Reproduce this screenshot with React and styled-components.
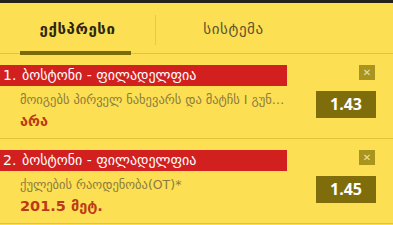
import React from 'react';
import styled, { createGlobalStyle } from 'styled-components';

const GlobalStyle = createGlobalStyle`
    html, body {
        margin: 0;
        padding: 0;
        background: #fcdf52;
        font-family: 'DejaVu Sans', 'Noto Sans', sans-serif;
    }
`;

const Page = styled.div`
    width: 393px;
    height: 225px;
    overflow: hidden;
    border-top: 3px solid #24211a;
    box-sizing: border-box;
    background: #fcdf52;
`;

const Tabs = styled.div`
    display: flex;
    height: 51px;
    border-bottom: 1px solid #e4c23c;
    box-sizing: border-box;
`;

const Tab = styled.div`
    position: relative;
    width: 155px;
    display: flex;
    align-items: center;
    justify-content: center;
    font-size: 15px;
    letter-spacing: 0.6px;
    color: ${(p) => (p.active ? '#2b2612' : '#5b5330')};
    font-weight: ${(p) => (p.active ? 'bold' : 'normal')};
    padding-top: 2px;

    &::after {
        content: '';
        display: ${(p) => (p.active ? 'block' : 'none')};
        position: absolute;
        left: 20px;
        right: 24px;
        bottom: -2px;
        height: 4px;
        background: #7b6a08;
    }
`;

const Divider = styled.div`
    width: 1px;
    margin: 12px 0 8px;
    background: #e8c84a;
`;

const Card = styled.div`
    display: flex;
    padding: 11px 17px 0 0;
    height: 85px;
    box-sizing: border-box;
    border-bottom: 1px solid #e4c23c;
`;

const Info = styled.div`
    flex: 0 0 287px;
    min-width: 0;
`;

const Title = styled.div`
    height: 21px;
    background: #d2201f;
    color: #fff;
    font-size: 14px;
    line-height: 21px;
    padding-left: 3px;
    white-space: nowrap;
    overflow: hidden;
`;

const Num = styled.span`
    display: inline-block;
    width: 19px;
`;

const Market = styled.div`
    margin: 6px 2px 0 20px;
    font-size: 12.5px;
    line-height: 16px;
    color: #8b7a3e;
    white-space: nowrap;
    overflow: hidden;
    text-overflow: ellipsis;
`;

const Pick = styled.div`
    margin: 4px 0 0 20px;
    font-size: 14.5px;
    line-height: 18px;
    font-weight: bold;
    color: #bb3a17;
`;

const Side = styled.div`
    flex: 1;
    display: flex;
    flex-direction: column;
    align-items: flex-end;
`;

const Close = styled.div`
    width: 16px;
    height: 15px;
    margin-right: 1px;
    background: #a8941f;
    color: #efe3a0;
    font-size: 10px;
    line-height: 15px;
    text-align: center;
`;

const Odds = styled.div`
    margin-top: 11px;
    width: 60px;
    height: 27px;
    background: #7f6d0b;
    color: #fff;
    font-family: 'Open Sans', 'DejaVu Sans', sans-serif;
    font-weight: bold;
    font-size: 16px;
    line-height: 27px;
    text-align: center;
`;

const bets = [
    { teams: 'ბოსტონი - ფილადელფია', market: 'მოიგებს პირველ ნახევარს და მატჩს I გუნდი', pick: 'არა', odds: '1.43' },
    { teams: 'ბოსტონი - ფილადელფია', market: 'ქულების რაოდენობა(OT)*', pick: '201.5 მეტ.', odds: '1.45' },
];

export default function App() {
    return (
        <Page>
            <GlobalStyle />
            <Tabs>
                <Tab active>ექსპრესი</Tab>
                <Divider />
                <Tab>სისტემა</Tab>
            </Tabs>
            {bets.map((b, i) => (
                <Card key={i}>
                    <Info>
                        <Title>
                            <Num>{i + 1}.</Num>
                            {b.teams}
                        </Title>
                        <Market>{b.market}</Market>
                        <Pick>{b.pick}</Pick>
                    </Info>
                    <Side>
                        <Close>✕</Close>
                        <Odds>{b.odds}</Odds>
                    </Side>
                </Card>
            ))}
        </Page>
    );
}
